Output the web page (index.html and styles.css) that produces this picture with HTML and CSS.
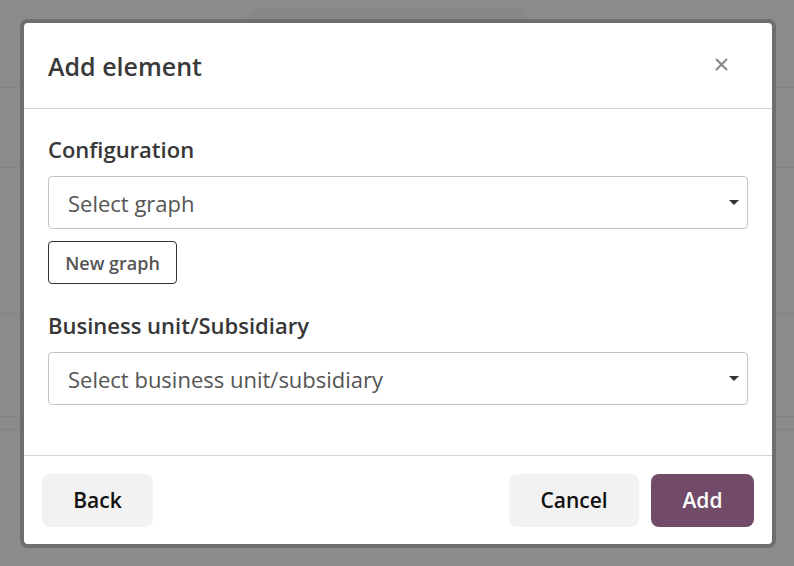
FILE: index.html
```html
<!DOCTYPE html>
<html lang="en">
<head>
<meta charset="utf-8">
<title>Add element</title>
<link rel="stylesheet" href="styles.css">
</head>
<body>
<div class="backdrop">
  <div class="tab"></div>
  <div class="bg-row r1"></div>
  <div class="bg-row r2"></div>
  <div class="bg-row r3"></div>
  <div class="bg-row r4"></div>
  <div class="bg-row r5"></div>
</div>
<div class="modal">
  <div class="modal-header">
    <h4 class="modal-title">Add element</h4>
    <button class="close" aria-label="Close">
      <svg width="13" height="13" viewBox="0 0 13 13"><path d="M1 1L12 12M12 1L1 12" stroke="#8a8a8a" stroke-width="2.2"/></svg>
    </button>
  </div>
  <div class="modal-body">
    <label class="field-label">Configuration</label>
    <div class="select">
      <span>Select graph</span>
      <span class="caret"></span>
    </div>
    <button class="btn-outline">New graph</button>
    <label class="field-label second">Business unit/Subsidiary</label>
    <div class="select">
      <span>Select business unit/subsidiary</span>
      <span class="caret"></span>
    </div>
  </div>
  <div class="modal-footer">
    <button class="btn btn-light btn-back">Back</button>
    <div class="spacer"></div>
    <button class="btn btn-light btn-cancel">Cancel</button>
    <button class="btn btn-primary">Add</button>
  </div>
</div>
</body>
</html>
```
FILE: styles.css
```css
* { box-sizing: border-box; }
html, body { margin: 0; padding: 0; }
body {
  width: 794px;
  height: 566px;
  overflow: hidden;
  background: #8b8b8b;
  font-family: "Open Sans", "Noto Sans", sans-serif;
  position: relative;
}
.backdrop {
  display: flex;
  flex-direction: column;
}
.tab {
  margin: 8px 0 0 247px;
  width: 278px;
  height: 30px;
  background: #878787;
  border-radius: 12px 12px 0 0;
}
.bg-row { border-bottom: 1px solid #828282; }
.r1 { height: 50px; }
.r2 { height: 80px; }
.r3 { height: 146px; }
.r4 { height: 103px; }
.r5 { height: 13px; }

.modal {
  position: absolute;
  left: 20px;
  top: 19px;
  width: 756px;
  height: 529px;
  background: #fff;
  border: 4px solid #6e6e6e;
  border-radius: 8px;
  display: flex;
  flex-direction: column;
  color: #333;
}
.modal-header {
  height: 86px;
  flex: none;
  border-bottom: 1px solid #d3d3d3;
  display: flex;
  align-items: center;
  justify-content: space-between;
  padding: 0 44px 0 24px;
}
.modal-title {
  margin: 0;
  font-size: 25px;
  font-weight: 600;
  color: #3a3a3a;
  line-height: 30px;
}
.close {
  border: 0;
  background: none;
  padding: 0;
  width: 13px;
  height: 13px;
  display: flex;
  margin-bottom: 2px;
}
.modal-body {
  flex: 1;
  padding: 27px 24px 0 24px;
  display: flex;
  flex-direction: column;
  align-items: flex-start;
}
.field-label {
  font-size: 22px;
  font-weight: 600;
  color: #373737;
  line-height: 26px;
}
.field-label.second { margin-top: 28px; }
.select {
  margin-top: 14px;
  width: 700px;
  height: 53px;
  border: 1px solid #c4c4c4;
  border-radius: 4px;
  display: flex;
  align-items: center;
  justify-content: space-between;
  padding: 0 8px 0 19px;
  font-size: 22px;
  color: #555;
}
.caret {
  width: 0;
  height: 0;
  border-left: 5px solid transparent;
  border-right: 5px solid transparent;
  border-top: 5px solid #333;
}
.btn-outline {
  margin-top: 12px;
  height: 43px;
  width: 129px;
  background: #fff;
  border: 1px solid #333;
  border-radius: 4px;
  font-family: inherit;
  font-size: 18px;
  font-weight: 600;
  color: #555;
  padding: 0;
}
.modal-footer {
  height: 89px;
  flex: none;
  border-top: 1px solid #d3d3d3;
  display: flex;
  align-items: center;
  padding: 0 18px;
  gap: 12px;
}
.spacer { flex: 1; }
.btn {
  height: 53px;
  border: 0;
  border-radius: 8px;
  font-family: inherit;
  font-size: 21px;
  font-weight: 600;
  padding: 0;
}
.btn-light { background: #f2f2f2; color: #111; }
.btn-back { width: 111px; }
.btn-cancel { width: 130px; }
.btn-primary { background: #714b67; color: #fff; width: 103px; }
```
